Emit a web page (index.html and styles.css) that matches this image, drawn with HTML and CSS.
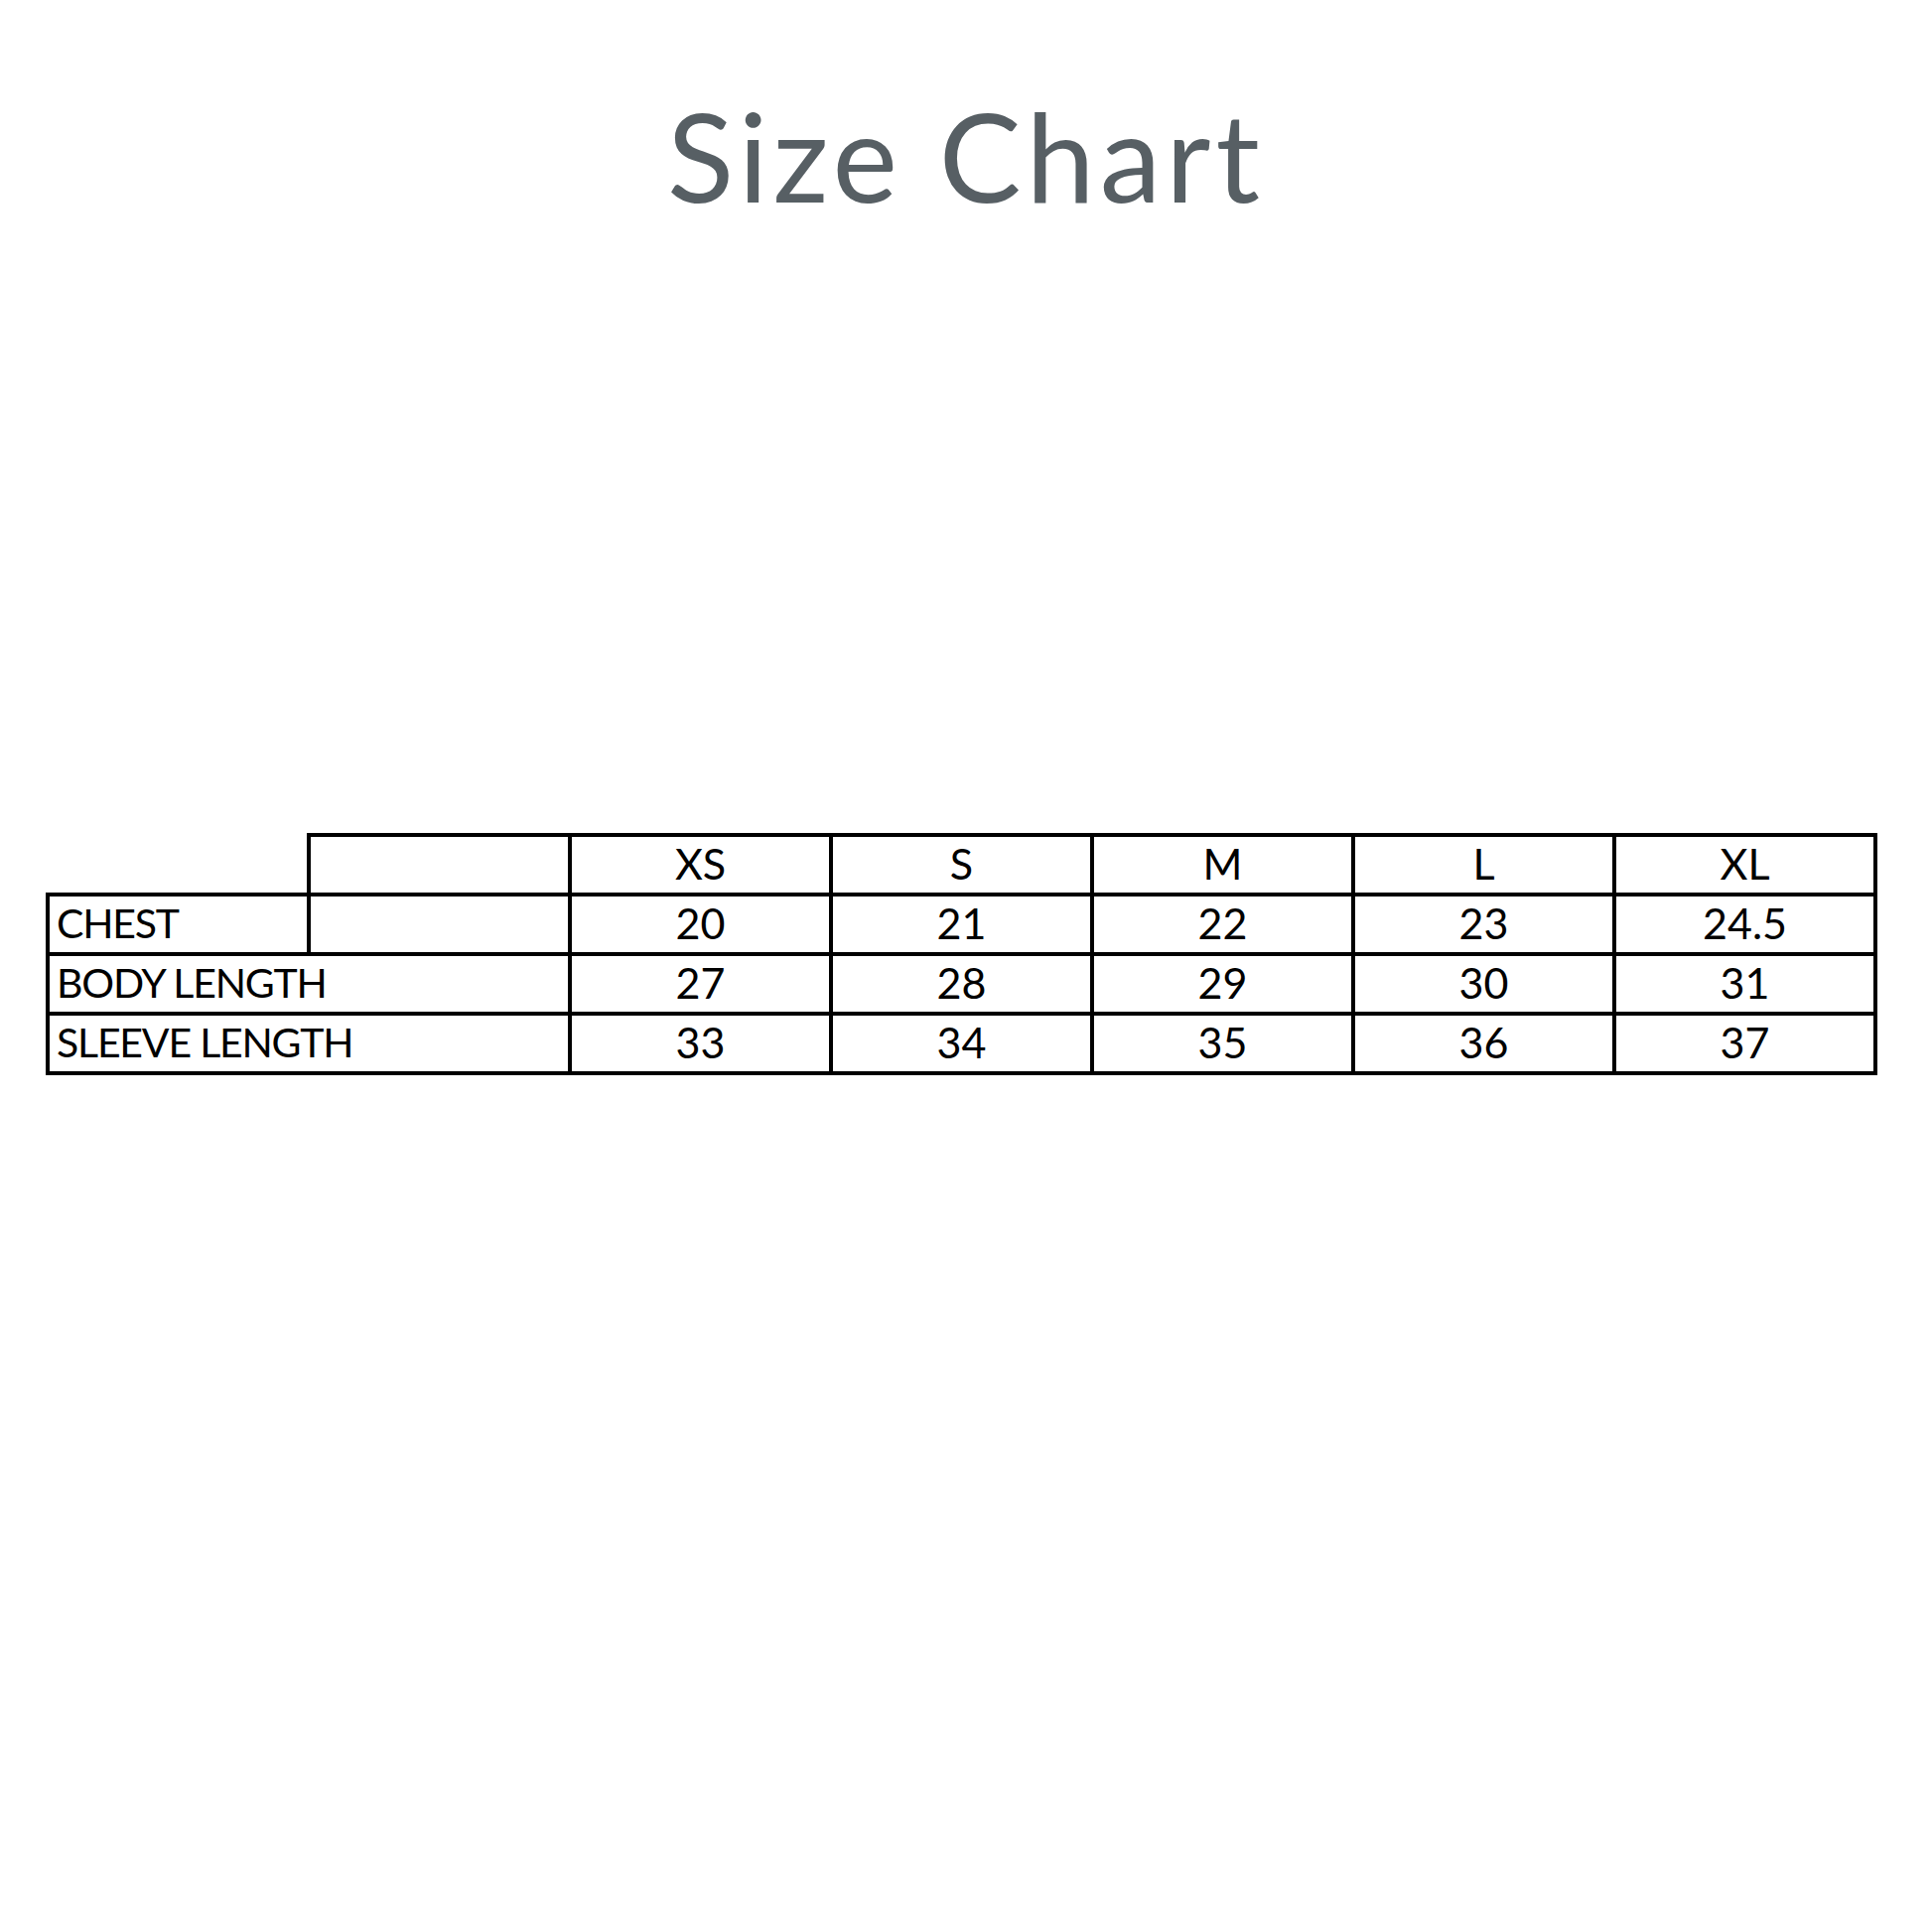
FILE: index.html
```html
<!DOCTYPE html>
<html lang="en">
<head>
<meta charset="utf-8">
<title>Size Chart</title>
<link rel="stylesheet" href="styles.css">
</head>
<body>
<main class="page">
  <h1 class="title">Size Chart</h1>
  <table class="chart">
    <colgroup>
      <col class="c"><col class="c"><col class="c"><col class="c"><col class="c"><col class="c"><col class="c">
    </colgroup>
    <tr>
      <td class="blank"></td>
      <td></td>
      <td class="num">XS</td>
      <td class="num">S</td>
      <td class="num">M</td>
      <td class="num">L</td>
      <td class="num">XL</td>
    </tr>
    <tr>
      <td class="label">CHEST</td>
      <td></td>
      <td class="num">20</td>
      <td class="num">21</td>
      <td class="num">22</td>
      <td class="num">23</td>
      <td class="num">24.5</td>
    </tr>
    <tr>
      <td class="label" colspan="2">BODY LENGTH</td>
      <td class="num">27</td>
      <td class="num">28</td>
      <td class="num">29</td>
      <td class="num">30</td>
      <td class="num">31</td>
    </tr>
    <tr>
      <td class="label" colspan="2">SLEEVE LENGTH</td>
      <td class="num">33</td>
      <td class="num">34</td>
      <td class="num">35</td>
      <td class="num">36</td>
      <td class="num">37</td>
    </tr>
  </table>
</main>
</body>
</html>
```

FILE: styles.css
```css
html, body {
  margin: 0;
  padding: 0;
  background: #ffffff;
}

.page {
  width: 1946px;
  height: 1946px;
  padding-top: 96px;
  box-sizing: border-box;
}

.title {
  margin: 0;
  text-align: center;
  font-family: "Lato", "Liberation Sans", sans-serif;
  font-weight: 400;
  font-size: 124px;
  letter-spacing: 5px;
  line-height: 120px;
  color: #575f64;
}

.chart {
  margin: 623px 0 0 46px;
  border-collapse: collapse;
  table-layout: fixed;
  width: 1844px;
  font-family: "Lato", "Liberation Sans", sans-serif;
  font-size: 43px;
  color: #000;
}

.chart .c {
  width: 263px;
}

.chart td {
  border: 4px solid #000;
  padding: 0 0 3px 0;
  line-height: 53px;
  vertical-align: middle;
}

.chart td.blank {
  border-top: none;
  border-left: none;
}

.chart td.num {
  text-align: center;
}

.chart td.label {
  text-align: left;
  padding-left: 7px;
  font-size: 41px;
  letter-spacing: -1.2px;
}
```
